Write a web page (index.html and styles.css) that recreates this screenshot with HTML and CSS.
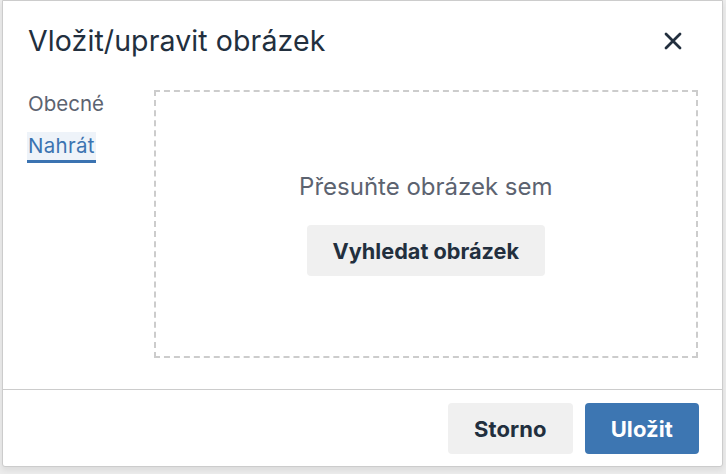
FILE: index.html
```html
<!DOCTYPE html>
<html lang="cs">
<head>
<meta charset="utf-8">
<title>Vložit/upravit obrázek</title>
<link rel="stylesheet" href="styles.css">
</head>
<body>
<div class="dialog">
  <div class="header">
    <div class="title">Vložit/upravit obrázek</div>
    <button class="close" aria-label="Zavřít">
      <svg width="18" height="18" viewBox="0 0 18 18"><path d="M2 2L16 16M16 2L2 16" stroke="#222f3e" stroke-width="2.8" stroke-linecap="round"/></svg>
    </button>
  </div>
  <div class="body">
    <div class="nav">
      <div class="tab">Obecné</div>
      <div class="tab active">Nahrát</div>
    </div>
    <div class="drop">
      <div class="drop-text">Přesuňte obrázek sem</div>
      <button class="btn secondary">Vyhledat obrázek</button>
    </div>
  </div>
  <div class="footer">
    <button class="btn secondary">Storno</button>
    <button class="btn primary">Uložit</button>
  </div>
</div>
</body>
</html>
```
FILE: styles.css
```css
html, body {
  margin: 0;
  padding: 0;
}
body {
  background: #ececec;
  font-family: Inter, "Noto Sans", "DejaVu Sans", sans-serif;
  color: #222f3e;
  height: 474px;
  overflow: hidden;
}
.dialog {
  margin-left: 2px;
  width: 721px;
  height: 467px;
  box-sizing: border-box;
  border: 1px solid #cccccc;
  border-radius: 0 0 3px 3px;
  background: #ffffff;
  display: flex;
  flex-direction: column;
  box-shadow: 0 3px 6px rgba(0,0,0,0.08);
}
.header {
  height: 79px;
  display: flex;
  align-items: center;
  justify-content: space-between;
  padding: 0 40px 0 25px;
}
.title {
  font-size: 28.5px;
  line-height: 34px;
  letter-spacing: 0.1px;
  color: #222f3e;
}
.close {
  border: 0;
  background: none;
  padding: 0;
  width: 18px;
  height: 18px;
  display: flex;
}
.body {
  flex: 1;
  display: flex;
  padding: 10px 24px 0 24px;
}
.nav {
  width: 127px;
  display: flex;
  flex-direction: column;
  gap: 14px;
}
.tab {
  font-size: 20.5px;
  line-height: 28px;
  color: #5c6370;
  align-self: flex-start;
  padding-left: 1px;
}
.tab.active {
  color: #3b73b1;
  background: #eef3f9;
  border-bottom: 3px solid #3b73b1;
  padding: 0 1px;
  letter-spacing: 0.3px;
}
.drop {
  width: 546px;
  height: 268px;
  box-sizing: border-box;
  border: 2px dashed #cccccc;
  display: flex;
  flex-direction: column;
  align-items: center;
  justify-content: center;
  gap: 23px;
}
.drop-text {
  font-size: 24px;
  line-height: 30px;
  color: #5c6370;
}
.btn {
  font-family: Inter, "Noto Sans", "DejaVu Sans", sans-serif;
  font-weight: 700;
  font-size: 22px;
  letter-spacing: 0.1px;
  border: 0;
  border-radius: 4px;
  height: 51px;
  padding: 0 26px;
  cursor: pointer;
}
.drop .btn {
  font-size: 21.7px;
  letter-spacing: 0;
}
.btn.secondary {
  background: #f0f0f0;
  color: #222f3e;
}
.btn.primary {
  background: #3d76b2;
  color: #ffffff;
}
.footer {
  border-top: 1px solid #cccccc;
  display: flex;
  justify-content: flex-end;
  gap: 12px;
  padding: 13px 23px 12px;
}
```
